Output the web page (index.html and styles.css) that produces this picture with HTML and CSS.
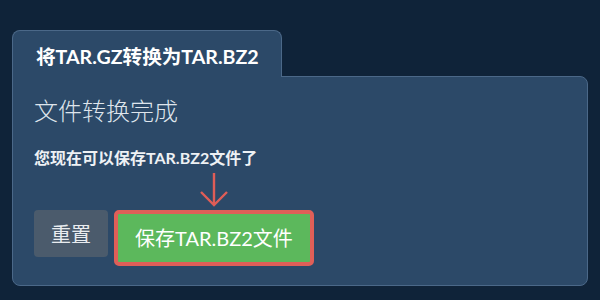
FILE: index.html
```html
<!DOCTYPE html>
<html lang="zh-CN">
<head>
  <meta charset="UTF-8">
  <meta name="viewport" content="width=device-width, initial-scale=1.0">
  <title>将TAR.GZ转换为TAR.BZ2</title>
  <link rel="stylesheet" href="styles.css">
</head>
<body>
  <div class="converter">
    <div class="tab">将TAR.GZ转换为TAR.BZ2</div>
    <div class="panel">
      <h2 class="panel-title">文件转换完成</h2>
      <p class="panel-note">您现在可以保存TAR.BZ2文件了</p>
      <div class="actions">
        <button class="button button-reset">重置</button>
        <div class="save-wrap">
          <svg class="hint-arrow" width="30" height="36" viewBox="0 0 30 36">
            <path d="M15 1 V33 M2 20 L15 33 L28 20" fill="none" stroke="#df5d57" stroke-width="2.4"/>
          </svg>
          <button class="button button-save">保存TAR.BZ2文件</button>
        </div>
      </div>
    </div>
  </div>
</body>
</html>
```

FILE: styles.css
```css
body { margin: 0; background: #0f2339; font-family: "Lato", "Noto Sans CJK SC", sans-serif; }
.converter { padding: 30px 12px 0; }
.tab { display: inline-block; position: relative; z-index: 1; margin-bottom: -1px; padding: 14px 22px 8px 23px; background: #2c4968; border: 1px solid #4b6888; border-bottom: none; border-radius: 8px 8px 0 0; color: #fff; font-size: 19.6px; font-weight: 700; line-height: 24px; white-space: nowrap; }
.panel { background: #2c4968; border: 1px solid #4b6888; border-radius: 0 8px 8px 8px; padding: 19px 21px 19px; }
.panel-title { margin: 0; color: #dfe5ec; font-size: 24px; font-weight: 300; line-height: 29px; }
.panel-note { margin: 23px 0 0; color: #eef1f4; font-size: 16px; font-weight: 700; line-height: 19px; }
.actions { display: flex; align-items: flex-start; gap: 6px; margin-top: 43px; }
.button { font-family: inherit; font-size: 20px; line-height: 24px; height: 47px; padding: 0 17px; border: none; border-radius: 4px; color: #fff; cursor: pointer; }
.button-reset { background: #4b5b6c; color: #e9ecef; }
.save-wrap { position: relative; }
.button-save { background: #5cb85c; border: 4px solid #df5f58; border-radius: 5px; height: 56px; padding: 0 17px; }
.hint-arrow { position: absolute; left: 85px; top: -38px; }
```
